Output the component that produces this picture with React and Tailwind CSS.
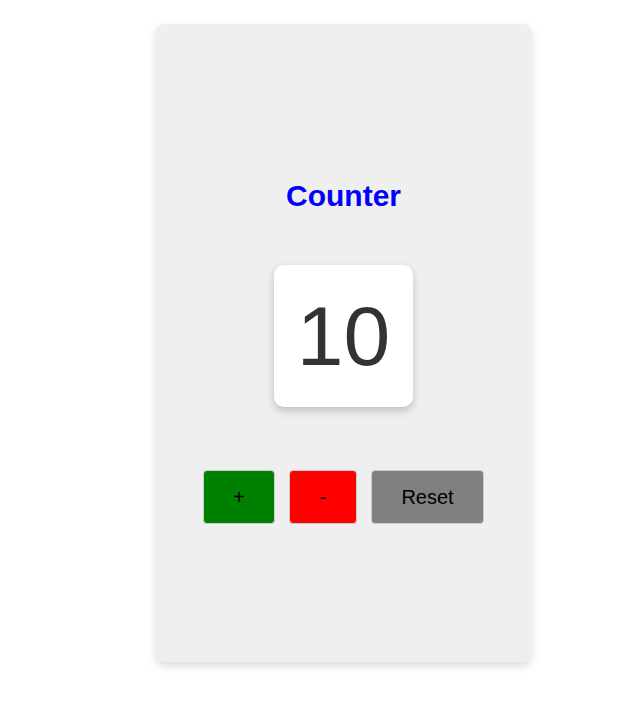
export default function App() {
  const count = 10;

  return (
    <div className="min-h-[718px] bg-white pt-[24px] font-['Liberation_Sans',Arial,sans-serif]">
      <div className="ml-[156px] flex h-[638px] w-[375px] flex-col items-center rounded-lg bg-[#efefef] pt-[155px] shadow-[0_4px_10px_rgba(0,0,0,0.15)]">
        <h1 className="text-[30px] font-bold leading-[34px] text-[#0000ff]">Counter</h1>

        {/* count display */}
        <div className="mt-[52px] flex h-[142px] w-[139px] items-center justify-center rounded-[10px] bg-white shadow-[0_4px_8px_rgba(0,0,0,0.2)]">
          <span className="text-[84px] leading-none text-[#333333]">{count}</span>
        </div>

        <div className="mt-[63px] flex items-center gap-[14px]">
          <button className="h-[54px] w-[72px] rounded border border-[#cccccc] bg-[#008000] text-[20px] text-black">
            +
          </button>
          <button className="h-[54px] w-[68px] rounded border border-[#cccccc] bg-[#ff0000] text-[20px] text-black">
            -
          </button>
          <button className="h-[54px] w-[113px] rounded border border-[#cccccc] bg-[#808080] text-[20px] text-black">
            Reset
          </button>
        </div>
      </div>
    </div>
  );
}
